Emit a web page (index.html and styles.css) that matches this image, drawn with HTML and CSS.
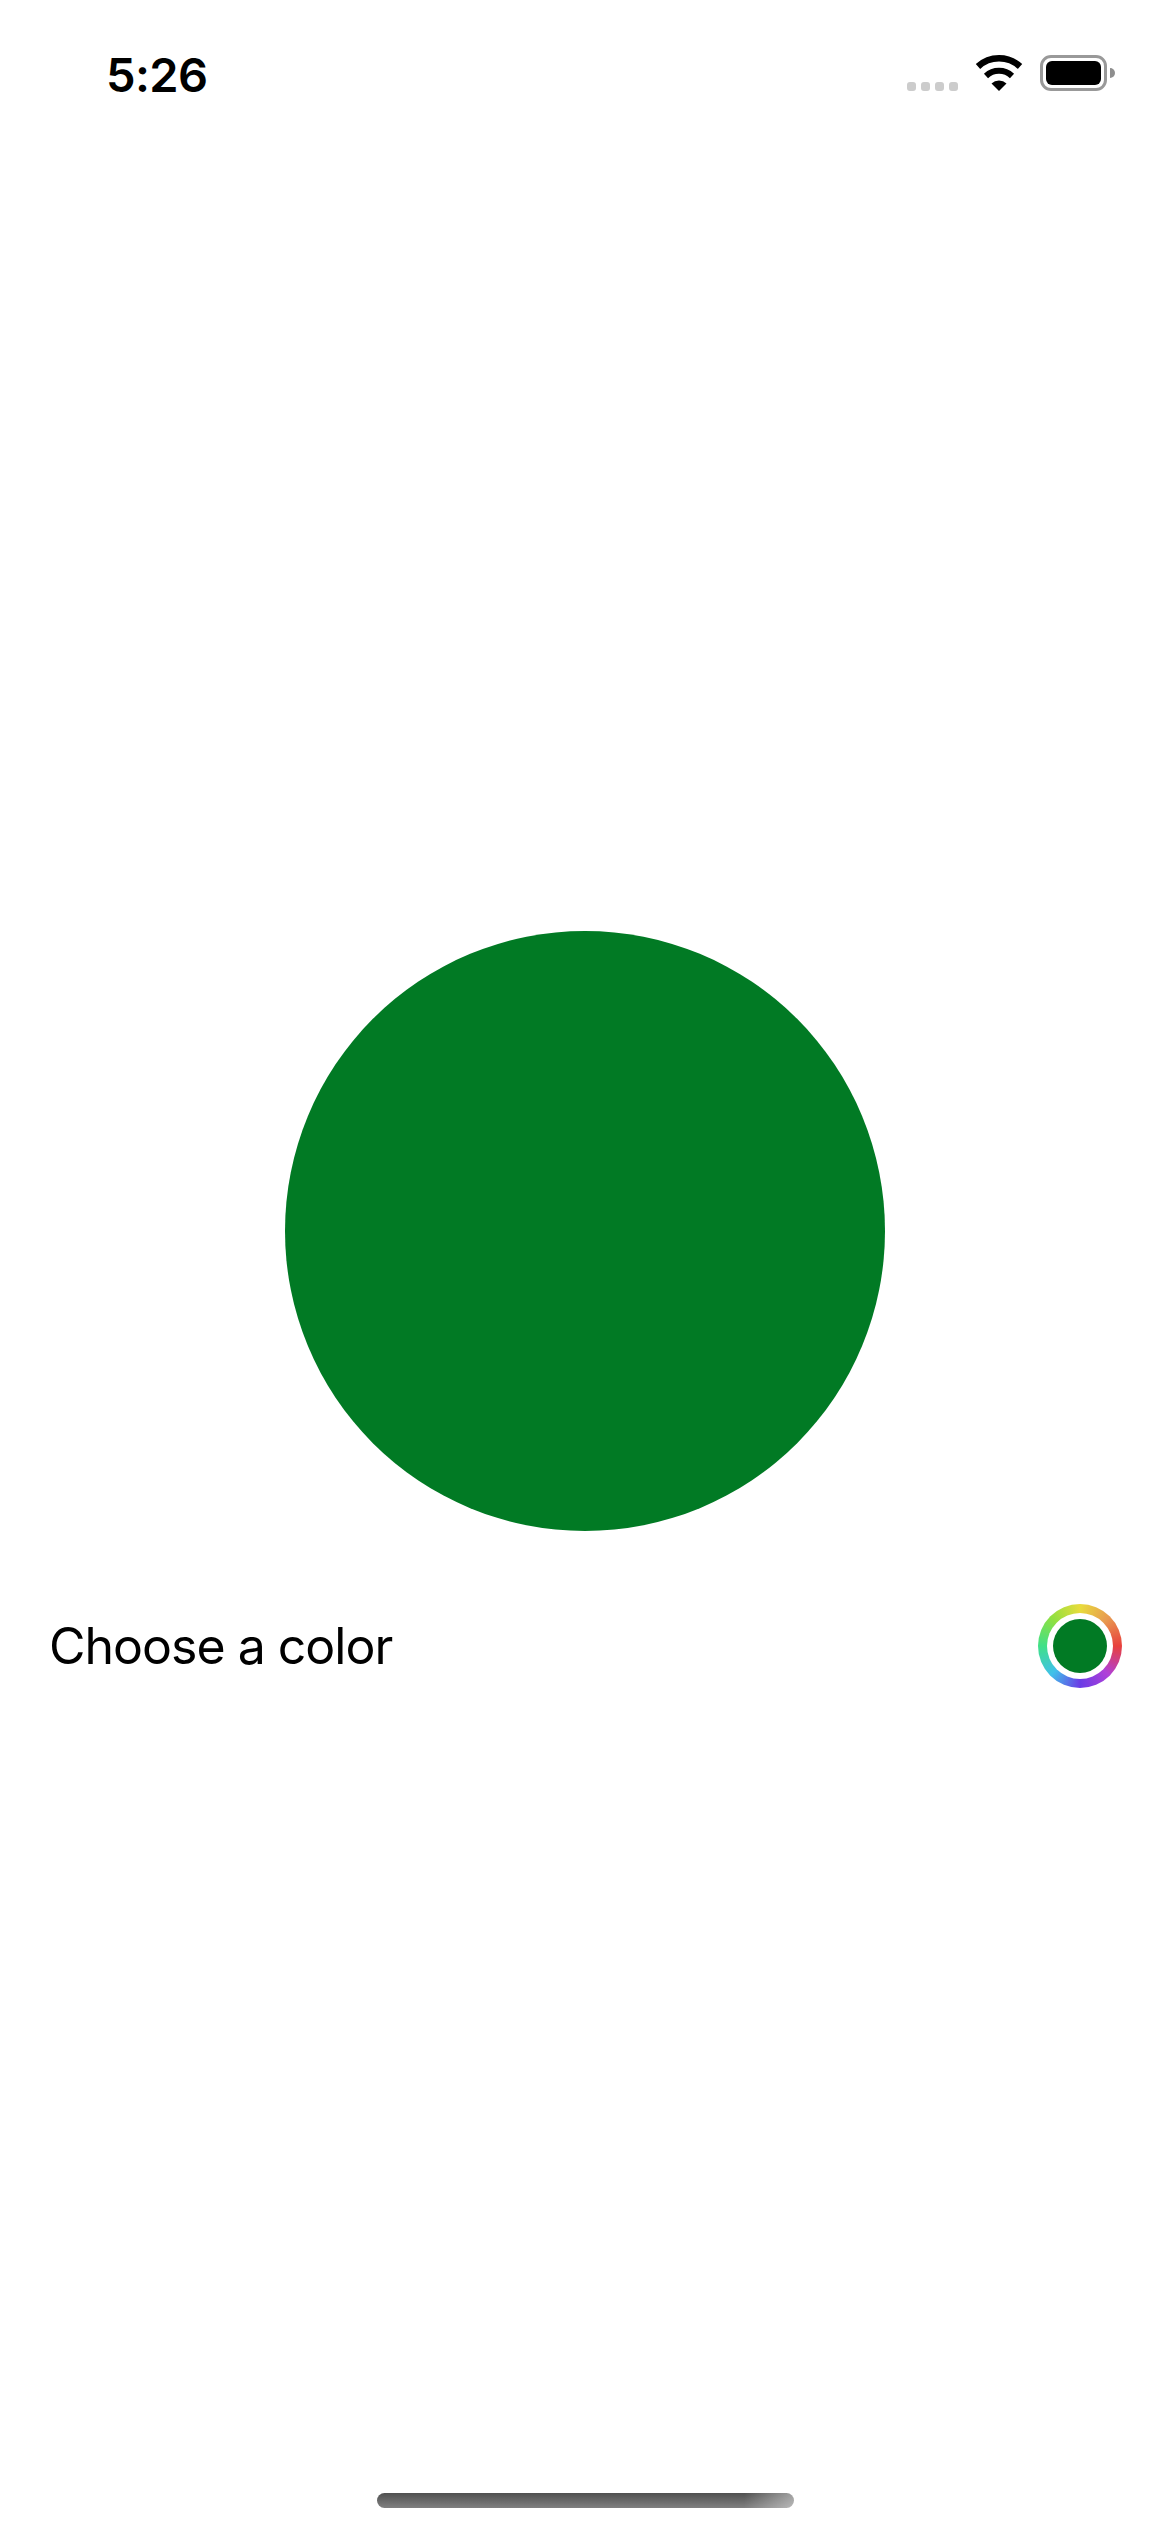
FILE: index.html
```html
<!DOCTYPE html>
<html>
    <head>
        <meta charset="utf-8">
        <title>Choose a color</title>
        <link rel="stylesheet" href="styles.css">
    </head>
    <body>
        <div class="statusbar">
            <span class="time">5:26</span>
            <div class="status-icons">
                <div class="signal">
                    <span class="dot"></span>
                    <span class="dot"></span>
                    <span class="dot"></span>
                    <span class="dot"></span>
                </div>
                <svg class="wifi" width="48" height="36" viewBox="0 0 48 36">
                    <path d="M3 11.5A31 31 0 0 1 45 11.5" fill="none" stroke="#000" stroke-width="6.5"/>
                    <path d="M11 21A19 19 0 0 1 37 21" fill="none" stroke="#000" stroke-width="6"/>
                    <path d="M16.5 28.5A11 11 0 0 1 31.5 28.5L24 36Z" fill="#000"/>
                </svg>
                <div class="battery">
                    <div class="battery-body">
                        <div class="battery-fill"></div>
                    </div>
                    <div class="battery-nub"></div>
                </div>
            </div>
        </div>
        <div class="content">
            <div class="circle"></div>
            <div class="picker-row">
                <span class="picker-label">Choose a color</span>
                <div class="swatch-ring">
                    <div class="swatch-gap">
                        <div class="swatch"></div>
                    </div>
                </div>
            </div>
        </div>
        <div class="home-bar"></div>
    </body>
</html>
```

FILE: styles.css
```css
body{
    margin: 0;
    height: 2532px;
    background: #fff;
    font-family: Inter, "Liberation Sans", sans-serif;
    color: #000;
    display: flex;
    flex-direction: column;
    overflow: hidden;
}
.statusbar{
    display: flex;
    justify-content: space-between;
    align-items: flex-start;
    padding: 47px 55px 0 106px;
    height: 63px;
}
.time{
    font-size: 47px;
    font-weight: 600;
    line-height: 55px;
    letter-spacing: -0.6px;
}
.status-icons{
    display: flex;
    align-items: flex-end;
    padding-top: 8px;
    height: 36px;
}
.signal{
    display: flex;
    gap: 5px;
    margin-right: 17px;
}
.dot{
    width: 9px;
    height: 9px;
    border-radius: 3px;
    background: #ccc;
}
.wifi{
    display: block;
    margin-right: 17px;
}
.battery{
    display: flex;
    align-items: center;
}
.battery-body{
    box-sizing: border-box;
    width: 67px;
    height: 36px;
    border: 3px solid #999;
    border-radius: 11px;
    padding: 3px;
}
.battery-fill{
    height: 100%;
    background: #000;
    border-radius: 6px;
}
.battery-nub{
    width: 5px;
    height: 10px;
    margin-left: 3px;
    background: #8e8e8e;
    border-radius: 0 5px 5px 0;
}
.content{
    flex: 1;
    padding-top: 821px;
}
.circle{
    width: 600px;
    height: 600px;
    margin: 0 auto;
    border-radius: 50%;
    background: #017a24;
}
.picker-row{
    display: flex;
    justify-content: space-between;
    align-items: center;
    padding: 73px 48px 0 49px;
}
.picker-label{
    font-size: 50px;
    font-weight: 400;
    line-height: 60px;
    letter-spacing: -1px;
}
.swatch-ring{
    box-sizing: border-box;
    width: 84px;
    height: 84px;
    padding: 9px;
    border-radius: 50%;
    background: conic-gradient(#e8dc3c, #e89a50 45deg, #e8403c 90deg, #b040d8 135deg, #6a3ce6 180deg, #40c0ea 225deg, #40e088 270deg, #90e040 315deg, #e8dc3c);
}
.swatch-gap{
    box-sizing: border-box;
    width: 66px;
    height: 66px;
    padding: 6px;
    border-radius: 50%;
    background: #fff;
}
.swatch{
    width: 54px;
    height: 54px;
    border-radius: 50%;
    background: #017a24;
}
.home-bar{
    width: 417px;
    height: 15px;
    margin: 0 auto 24px 377px;
    border-radius: 8px;
    background: linear-gradient(to right, transparent 88%, rgba(255,255,255,.45)), linear-gradient(#505050, #808080);
}
```
